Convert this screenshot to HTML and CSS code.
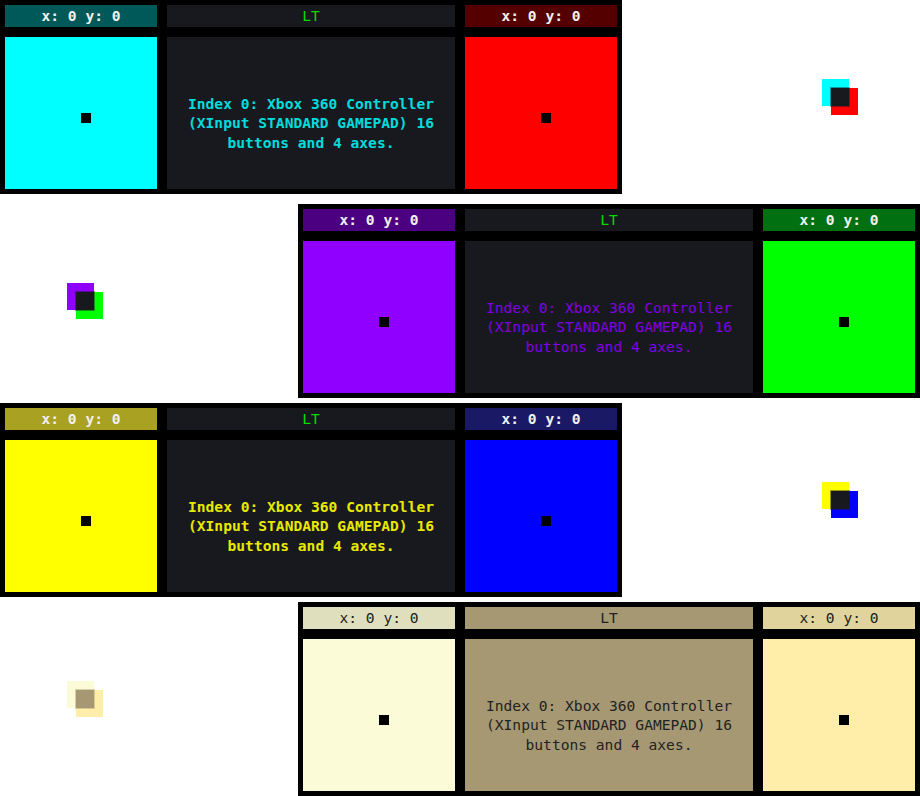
FILE: index.html
```html
<!DOCTYPE html>
<html>
<head>
<meta charset="utf-8">
<link rel="stylesheet" href="styles.css">
</head>
<body>
  <div class="row row-first">
    <div class="panel t1">
      <div class="hdr hdr-a">x: 0 y: 0</div>
      <div class="hdr hdr-mid">LT</div>
      <div class="hdr hdr-b">x: 0 y: 0</div>
      <div class="stick stick-a"><span class="dot"></span></div>
      <div class="info">Index 0: Xbox 360 Controller (XInput STANDARD GAMEPAD) 16 buttons and 4 axes.</div>
      <div class="stick stick-b"><span class="dot"></span></div>
    </div>
    <div class="mini mini-right t1">
      <span class="sq sq-a"></span><span class="sq sq-b"></span><span class="sq sq-mid"></span>
    </div>
  </div>

  <div class="row row-second">
    <div class="mini mini-left t2">
      <span class="sq sq-a"></span><span class="sq sq-b"></span><span class="sq sq-mid"></span>
    </div>
    <div class="panel panel-right t2">
      <div class="hdr hdr-a">x: 0 y: 0</div>
      <div class="hdr hdr-mid">LT</div>
      <div class="hdr hdr-b">x: 0 y: 0</div>
      <div class="stick stick-a"><span class="dot"></span></div>
      <div class="info">Index 0: Xbox 360 Controller (XInput STANDARD GAMEPAD) 16 buttons and 4 axes.</div>
      <div class="stick stick-b"><span class="dot"></span></div>
    </div>
  </div>

  <div class="row">
    <div class="panel t3">
      <div class="hdr hdr-a">x: 0 y: 0</div>
      <div class="hdr hdr-mid">LT</div>
      <div class="hdr hdr-b">x: 0 y: 0</div>
      <div class="stick stick-a"><span class="dot"></span></div>
      <div class="info">Index 0: Xbox 360 Controller (XInput STANDARD GAMEPAD) 16 buttons and 4 axes.</div>
      <div class="stick stick-b"><span class="dot"></span></div>
    </div>
    <div class="mini mini-right t3">
      <span class="sq sq-a"></span><span class="sq sq-b"></span><span class="sq sq-mid"></span>
    </div>
  </div>

  <div class="row">
    <div class="mini mini-left t4">
      <span class="sq sq-a"></span><span class="sq sq-b"></span><span class="sq sq-mid"></span>
    </div>
    <div class="panel panel-right t4">
      <div class="hdr hdr-a">x: 0 y: 0</div>
      <div class="hdr hdr-mid">LT</div>
      <div class="hdr hdr-b">x: 0 y: 0</div>
      <div class="stick stick-a"><span class="dot"></span></div>
      <div class="info">Index 0: Xbox 360 Controller (XInput STANDARD GAMEPAD) 16 buttons and 4 axes.</div>
      <div class="stick stick-b"><span class="dot"></span></div>
    </div>
  </div>
</body>
</html>
```

FILE: styles.css
```css
html, body {
  margin: 0;
  padding: 0;
  background: #ffffff;
}

body {
  width: 920px;
  font-family: "DejaVu Sans Mono", "Liberation Mono", monospace;
  font-size: 14.6px;
}

.row {
  display: flex;
  align-items: center;
  height: 194px;
  margin-top: 5px;
}

.row-first {
  margin-top: 0;
}

.row-second {
  margin-top: 10px;
}

.panel {
  display: grid;
  grid-template-columns: 152px 288px 152px;
  grid-template-rows: 22px 152px;
  column-gap: 10px;
  row-gap: 10px;
  padding: 5px;
  background: #000000;
  flex: none;
}

.panel-right {
  margin-left: auto;
}

.hdr {
  display: flex;
  align-items: center;
  justify-content: center;
  line-height: 22px;
  white-space: pre;
}

.hdr-a, .hdr-b {
  font-weight: bold;
  color: #f0f0f0;
}

.hdr-mid {
  background: #18191e;
  color: #00dc00;
}

.stick {
  box-sizing: border-box;
  padding-left: 76px;
  padding-top: 76px;
}

.dot {
  display: block;
  width: 10px;
  height: 10px;
  background: #000000;
}

.info {
  box-sizing: border-box;
  padding-top: 20px;
  background: #18191e;
  display: flex;
  align-items: center;
  justify-content: center;
  text-align: center;
  line-height: 19.5px;
  font-weight: bold;
}

/* mini overlapping indicator */
.mini {
  display: grid;
  grid-template-columns: 9px 9px 9px 9px;
  grid-template-rows: 9px 9px 9px 9px;
  flex: none;
}

.mini-right {
  margin-left: 200px;
}

.mini-left {
  margin-left: 67px;
}

.sq-a {
  grid-column: 1 / 4;
  grid-row: 1 / 4;
}

.sq-b {
  grid-column: 2 / 5;
  grid-row: 2 / 5;
}

.sq-mid {
  grid-column: 2 / 4;
  grid-row: 2 / 4;
  background: #18191e;
  box-shadow: 0 0 0 1px rgba(24, 25, 30, 0.45);
}

/* theme 1: cyan / red */
.t1 .hdr-a { background: #005959; }
.t1 .hdr-b { background: #550000; }
.t1 .stick-a, .t1 .sq-a { background: #00ffff; }
.t1 .stick-b, .t1 .sq-b { background: #ff0000; }
.t1 .info { color: #00dcdc; }

/* theme 2: purple / green */
.t2 .hdr-a { background: #4b0082; }
.t2 .hdr-b { background: #007010; }
.t2 .stick-a, .t2 .sq-a { background: #9000ff; }
.t2 .stick-b, .t2 .sq-b { background: #00ff00; }
.t2 .info { color: #8000e6; font-weight: normal; }

/* theme 3: yellow / blue */
.t3 .hdr-a { background: #a9a121; }
.t3 .hdr-b { background: #191966; }
.t3 .stick-a, .t3 .sq-a { background: #ffff00; }
.t3 .stick-b, .t3 .sq-b { background: #0000ff; }
.t3 .info { color: #e8e800; }

/* theme 4: light */
.t4 .hdr-a { background: #dfdfbe; color: #222222; font-weight: normal; }
.t4 .hdr-b { background: #e0d49c; color: #222222; font-weight: normal; }
.t4 .hdr-mid { background: #a69873; color: #222222; }
.t4 .stick-a, .t4 .sq-a { background: #fbfbd7; }
.t4 .stick-b, .t4 .sq-b { background: #ffedaa; }
.t4 .info { background: #a69873; color: #222222; font-weight: normal; }
.t4 .sq-mid { background: #a69873; box-shadow: 0 0 0 1px rgba(166, 152, 115, 0.45); }
```
